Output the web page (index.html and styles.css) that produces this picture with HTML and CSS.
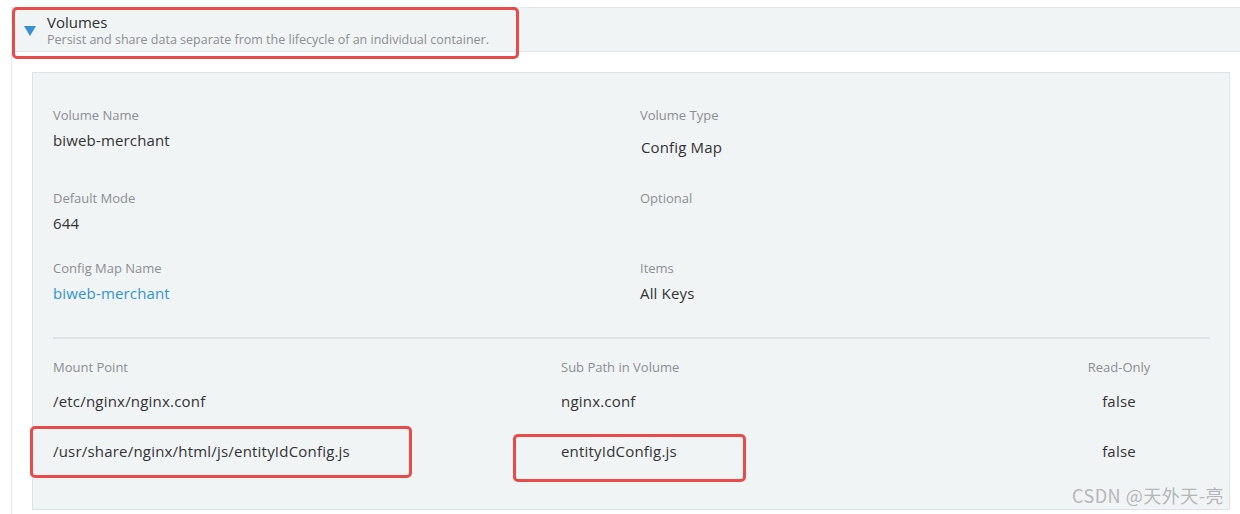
FILE: index.html
```html
<!DOCTYPE html>
<html>
<head>
<meta charset="utf-8">
<link rel="stylesheet" href="styles.css">
</head>
<body>
<div class="section">
  <div class="section-header">
    <svg class="caret" width="12" height="10" viewBox="0 0 12 10"><polygon points="0,0 12,0 6,10" fill="#3a8fd6"/></svg>
    <div class="titles">
      <div class="title">Volumes</div>
      <div class="subtitle">Persist and share data separate from the lifecycle of an individual container.</div>
    </div>
  </div>
  <div class="section-body">
    <div class="volume">
      <div class="fields">
        <div class="field">
          <div class="label">Volume Name</div>
          <div class="value">biweb-merchant</div>
        </div>
        <div class="field">
          <div class="label">Volume Type</div>
          <div class="value value-select">Config Map</div>
        </div>
        <div class="field">
          <div class="label">Default Mode</div>
          <div class="value">644</div>
        </div>
        <div class="field">
          <div class="label">Optional</div>
          <div class="value"></div>
        </div>
        <div class="field">
          <div class="label">Config Map Name</div>
          <div class="value link">biweb-merchant</div>
        </div>
        <div class="field">
          <div class="label">Items</div>
          <div class="value">All Keys</div>
        </div>
      </div>
      <hr class="divider">
      <div class="mounts">
        <div class="th">Mount Point</div>
        <div class="th">Sub Path in Volume</div>
        <div class="th th-ro">Read-Only</div>
        <div class="td">/etc/nginx/nginx.conf</div>
        <div class="td">nginx.conf</div>
        <div class="td td-ro">false</div>
        <div class="td">/usr/share/nginx/html/js/entityIdConfig.js</div>
        <div class="td">entityIdConfig.js</div>
        <div class="td td-ro">false</div>
      </div>
    </div>
  </div>
</div>
<div class="mark mark-1"></div>
<div class="mark mark-2"></div>
<div class="mark mark-3"></div>
<div class="watermark">CSDN @天外天-亮</div>
</body>
</html>
```
FILE: styles.css
```css
html, body {
  margin: 0;
  padding: 0;
  background: #ffffff;
  font-family: "Open Sans", "Noto Sans CJK SC", sans-serif;
  color: #333333;
  height: 514px;
  overflow: hidden;
}
body {
  position: relative;
}
.section {
  margin-top: 7px;
  margin-left: 11px;
}
.section-header {
  display: flex;
  align-items: flex-start;
  height: 43px;
  background: #f1f4f5;
  border-top: 1px solid #e2e6e8;
  border-bottom: 1px solid #e2e6e8;
  box-sizing: content-box;
}
.caret {
  margin: 18px 0 0 13px;
  flex: none;
}
.titles {
  margin-left: 11px;
  padding-top: 5px;
}
.title {
  font-size: 15px;
  line-height: 18px;
  color: #2f2f2f;
}
.subtitle {
  margin-top: 1px;
  font-size: 12.5px;
  line-height: 15px;
  color: #8a8f92;
}
.section-body {
  border-left: 1px solid #e6e9eb;
  padding: 20px 10px 10px 20px;
}
.volume {
  background: #f1f4f5;
  border: 1px solid #dce3e6;
  padding: 33px 19px 33px 20px;
}
.fields {
  display: grid;
  grid-template-columns: 1fr 1fr;
  column-gap: 17px;
}
.field {
  margin-bottom: 26px;
}
.label {
  font-size: 13px;
  line-height: 18px;
  color: #8a8f92;
}
.value {
  margin-top: 6px;
  font-size: 15px;
  line-height: 20px;
  min-height: 20px;
  letter-spacing: 0.15px;
  color: #333333;
}
.value-select {
  padding: 7px 0 6px 1px;
}
.link {
  color: #2f93d8;
}
.divider {
  margin: 8px 0 0 0;
  border: 0;
  height: 2px;
  background: #dde3e6;
}
.mounts {
  display: grid;
  grid-template-columns: 508px 1fr 182px;
  margin-top: 19px;
}
.th {
  font-size: 13px;
  line-height: 18px;
  color: #8a8f92;
}
.td {
  padding: 15px 0;
  font-size: 15px;
  line-height: 20px;
  letter-spacing: 0.2px;
  color: #333333;
}
.th-ro,
.td-ro {
  text-align: center;
}
.mark {
  position: absolute;
  border: 3px solid #e94a4a;
  border-radius: 5px;
  box-sizing: border-box;
}
.mark-1 { left: 12px; top: 7px; width: 507px; height: 52px; }
.mark-2 { left: 30px; top: 426px; width: 382px; height: 52px; }
.mark-3 { left: 513px; top: 434px; width: 233px; height: 48px; }
.watermark {
  position: absolute;
  left: 1072px;
  top: 483px;
  font-size: 18px;
  line-height: 24px;
  letter-spacing: 0.5px;
  color: #b4b7b9;
  font-family: "Noto Sans CJK SC", sans-serif;
}
```
